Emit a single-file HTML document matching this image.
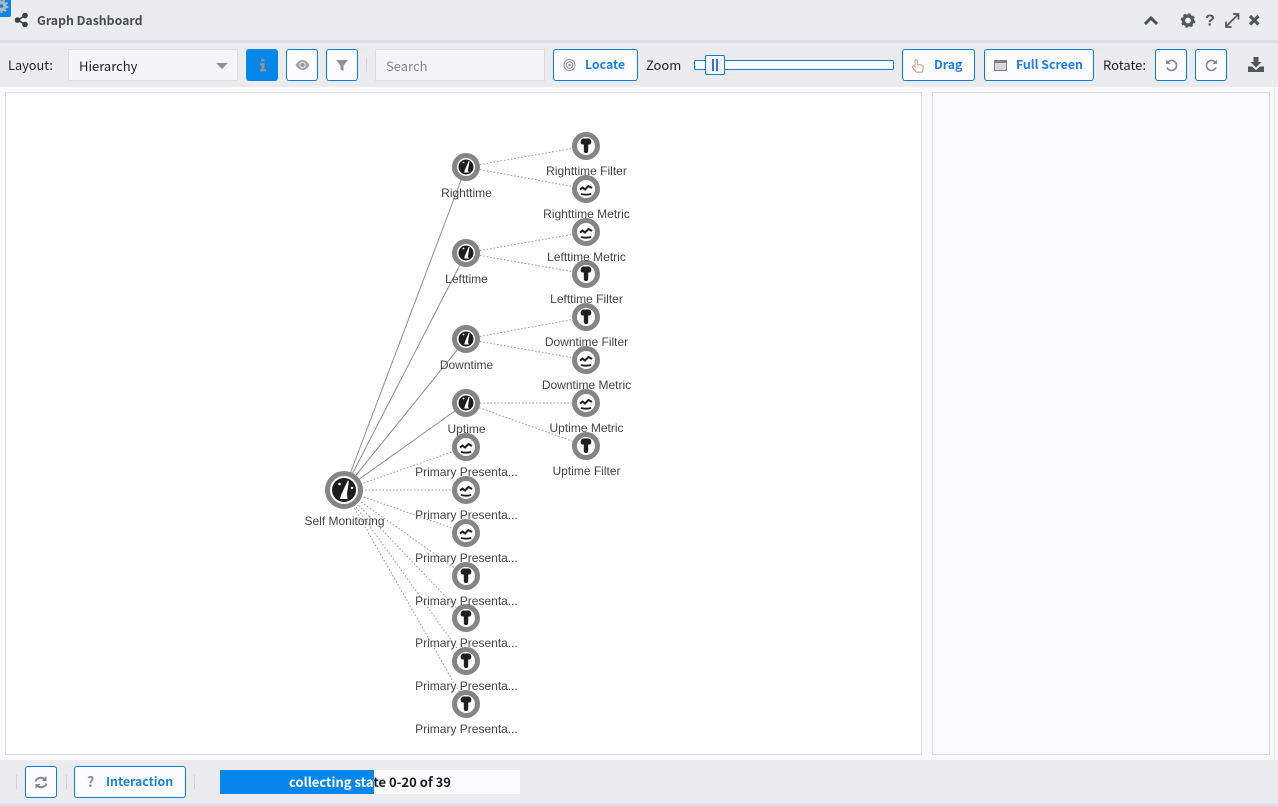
<!DOCTYPE html>
<html><head><meta charset="utf-8"><title>Graph Dashboard</title>
<style>
html,body{margin:0;padding:0;width:1278px;height:806px;overflow:hidden;background:#fafafc;font-family:"Noto Sans CJK JP","Liberation Sans",sans-serif;}
.a{position:absolute;box-sizing:border-box}
.btn{position:absolute;box-sizing:border-box;top:49px;height:32px;background:#fcfcff;border:1px solid #0a7fd6;border-radius:3px;color:#1f80e0;font-weight:700;font-size:12.3px;line-height:28px;white-space:nowrap}
.btn svg{position:absolute}
.lbl{position:absolute;font-size:13px;color:#222;line-height:18px;white-space:nowrap}
.sep{position:absolute;width:1px;background:#d2d2d8}
svg text{font-family:"Liberation Sans",sans-serif;font-size:12px;fill:#444;text-anchor:middle}
</style></head><body>
<div class="a" style="left:0;top:0;width:1278px;height:40px;background:#ebebf0"></div>
<div class="a" style="left:0;top:40px;width:1278px;height:3px;background:#dcdce2"></div>
<div class="a" style="left:0;top:43px;width:1278px;height:44px;background:#ebebf0"></div>

<div class="a" style="left:0;top:0;width:11px;height:17px;background:#0586e8;border-radius:0 0 2px 0"></div>
<svg class="a" style="left:0;top:0" width="9" height="14"><circle cx="1.500" cy="6" r="3.500" fill="none" stroke="#b5b5ba" stroke-width="3.500"/><circle cx="1.500" cy="6" r="6" fill="none" stroke="#b5b5ba" stroke-width="2" stroke-dasharray="2 2.200"/></svg>
<svg class="a" style="left:14px;top:12px" width="15" height="16" viewBox="0 0 15 16"><path d="M11 3.500 4 8l7 4.500" fill="none" stroke="#3d3d45" stroke-width="1.600"/><circle cx="11" cy="3.500" r="2.800" fill="#3d3d45"/><circle cx="3.500" cy="8" r="2.800" fill="#3d3d45"/><circle cx="11" cy="12.500" r="2.800" fill="#3d3d45"/></svg>
<div class="a" style="left:37px;top:11px;font-size:12.300px;line-height:18px;font-weight:700;color:#4a4a52;white-space:nowrap">Graph Dashboard</div>

<svg class="a" style="left:1140px;top:10px" width="125" height="22" viewBox="0 0 125 22">
<path d="M5 14l6-6 6 6" fill="none" stroke="#4f4f57" stroke-width="3"/>
<circle cx="48" cy="10.500" r="4.500" fill="none" stroke="#55555d" stroke-width="3.200"/><circle cx="48" cy="10.500" r="6.300" fill="none" stroke="#55555d" stroke-width="2" stroke-dasharray="2.500 2.450"/>
<text x="70" y="15.500" style="font-family:'Liberation Sans';font-size:16px;font-weight:700;fill:#55555d">?</text>
<path d="M86 16.500L98 4.500M86 11.500v5.500h5.500M98.500 9.500V4h-5.500" fill="none" stroke="#55555d" stroke-width="1.700"/>
<path d="M110 6l8.500 8.500M118.500 6l-8.500 8.500" stroke="#55555d" stroke-width="3.200" fill="none"/>
</svg>

<div class="lbl" style="left:8px;top:56px;font-size:12.800px">Layout:</div>
<div class="a" style="left:68px;top:49px;width:170px;height:32px;background:#f4f4f9;border:1px solid #dcdce2;"></div>
<div class="lbl" style="left:79px;top:57px;color:#222">Hierarchy</div>
<div class="a" style="left:216px;top:63px;width:0;height:0;border-left:6px solid transparent;border-right:6px solid transparent;border-top:6px solid #909097"></div>

<div class="btn" style="left:246px;width:32px;background:#0586e8;border-color:#0586e8"><svg style="left:12px;top:9px" width="8" height="13"><path d="M2 0h3.500v2.500H2zM1 4h4.500v6H7v2.500H1V10h1.500V6.500H1z" fill="#8a929a"/></svg></div>
<div class="btn" style="left:286px;width:32px"><svg style="left:8px;top:9px" width="15" height="12"><path d="M.5 6C3 2 5 1 7.500 1S12 2 14.500 6C12 10 10 11 7.500 11S3 10 .5 6z" fill="#a5a5a9"/><circle cx="7.500" cy="6" r="3.200" fill="#e8e8ec"/><circle cx="7.500" cy="6" r="2.200" fill="#9a9a9e"/></svg></div>
<div class="btn" style="left:326px;width:32px"><svg style="left:9px;top:9px" width="13" height="13"><path d="M0 1h12L7.500 6.500V12l-3-1.500v-4z" fill="#8f8f94"/></svg></div>
<div class="sep" style="left:366px;top:58px;height:14px"></div>
<div class="a" style="left:375px;top:49px;width:170px;height:32px;background:#f4f4f9;border:1px solid #dcdce2"></div>
<div class="lbl" style="left:386px;top:57px;color:#85858c">Search</div>
<div class="btn" style="left:553px;width:85px;padding-left:31px"><svg style="left:9px;top:8px" width="13" height="14"><circle cx="6.500" cy="7" r="5.500" fill="none" stroke="#9a9a9e" stroke-width="1"/><circle cx="6.500" cy="7" r="3.300" fill="none" stroke="#9a9a9e" stroke-width="1.200"/><circle cx="6.500" cy="7" r="1.300" fill="#9a9a9e"/></svg>Locate</div>
<div class="lbl" style="left:646px;top:56px">Zoom</div>
<div class="a" style="left:694px;top:60px;width:200px;height:10px;background:#fcfcff;border:1px solid #0a7fd6;border-radius:2px"></div>
<div class="a" style="left:705px;top:55px;width:20px;height:20px;background:#f4f6fc;border:1px solid #0a7fd6;border-radius:2px"></div>
<div class="a" style="left:712px;top:59px;width:2px;height:12px;background:#3b6fd0"></div>
<div class="a" style="left:716px;top:59px;width:2px;height:12px;background:#3b6fd0"></div>
<div class="btn" style="left:902px;width:73px;padding-left:31px"><svg style="left:8px;top:8px" width="15" height="16" viewBox="0 0 15 16"><path d="M5 1.500c1 0 1.300.5 1.300 1.500v4c2-.5 5.200-.3 5.700 1.200.5 1.800 0 4-1 6H5.500L1.500 9.500c-.6-1 .8-2 1.700-1.200L4 9V3c0-1 .3-1.500 1-1.500z" fill="none" stroke="#c9a27e" stroke-width="1.100"/></svg>Drag</div>
<div class="btn" style="left:984px;width:110px;padding-left:31px"><svg style="left:9px;top:10px" width="13" height="11"><rect x=".5" y=".5" width="12" height="10" fill="#d8d8de" stroke="#808086"/><rect x="0" y="0" width="13" height="3" fill="#808086"/></svg>Full Screen</div>
<div class="lbl" style="left:1103px;top:56px;font-size:13px">Rotate:</div>
<div class="btn" style="left:1155px;width:32px"><svg style="left:9px;top:8px" width="13" height="14" viewBox="0 0 13 14"><path d="M2.500 4.500A5 5 0 1 1 2 9.500" fill="none" stroke="#8a8a8e" stroke-width="1.600"/><path d="M1 1.500v4.500h4.500z" fill="#8a8a8e"/></svg></div>
<div class="btn" style="left:1195px;width:32px"><svg style="left:9px;top:8px" width="13" height="14" viewBox="0 0 13 14"><path d="M10.500 4.500A5 5 0 1 0 11 9.500" fill="none" stroke="#8a8a8e" stroke-width="1.600"/><path d="M12 1.500v4.500H7.500z" fill="#8a8a8e"/></svg></div>
<svg class="a" style="left:1248px;top:57px" width="16" height="15" viewBox="0 0 16 15"><path d="M5.500 0h5v5h3L8 10.500 2.500 5h3z" fill="#55555d"/><path d="M0 9.500h4L8 13l4-3.500h4V15H0z" fill="#55555d"/></svg>

<div class="a" style="left:5px;top:92px;width:917px;height:663px;background:#fff;border:1px solid #dcdde3"></div>
<div class="a" style="left:932px;top:92px;width:338px;height:663px;background:#fbfbfe;border:1px solid #dcdde3"></div>
<div class="a" style="left:1274px;top:87px;width:1px;height:673px;background:#e3e3e8"></div>

<svg class="a" style="left:0;top:0" width="1278" height="806" viewBox="0 0 1278 806">
<defs>
<g id="f"><circle r="11.500" fill="#fff" stroke="#858585" stroke-width="5"/><path d="M-3-7.500h6C5-7 5.800-4.500 5-2.500 4.500-1.500 3.500-1.500 2.200-1.500V4.500C2.200 6.500 1.200 7 0 7S-2.200 6.500-2.200 4.500V-1.500C-3.500-1.500-4.500-1.500-5-2.500-5.800-4.500-5-7-3-7.500z" fill="#1d1d1d"/></g>
<g id="m"><circle r="11.500" fill="#fff" stroke="#858585" stroke-width="5"/><path d="M-6 .5l2.500-2L-1 .5 2.500-3 6-1" fill="none" stroke="#1d1d1d" stroke-width="2"/><path d="M-5 4.800C-2.500 6 2.500 6 5 4.800" fill="none" stroke="#1d1d1d" stroke-width="1.800"/></g>
<g id="g"><circle r="11.500" fill="#fff" stroke="#858585" stroke-width="5"/><circle r="7.500" fill="#1d1d1d"/><path d="M3.500-6L2 3 2.800 5.500h-4.600l.6-2.500L2.700-6z" fill="#fff"/><circle cx="-2.500" cy="-4.500" r=".9" fill="#fff"/></g>
<g id="r"><circle r="16.500" fill="#fff" stroke="#858585" stroke-width="5"/><circle r="12" fill="#1d1d1d"/><path d="M5-9L3 3.500 3.500 9h-7.500l1.500-5L3.800-9.500z" fill="#fff"/><circle cx="-4.500" cy="-6" r="1.300" fill="#fff"/><circle cx="8" cy="-2" r="1.200" fill="#fff"/></g>
</defs>
<g fill="none" stroke="#8e8e8e" stroke-width="1">
<path d="M344 490L466 167M344 490L466 253M344 490L466 339M344 490L466 403"/>
</g>
<g fill="none" stroke="#9a9a9a" stroke-width="1" stroke-dasharray="1.600 1.900">
<path d="M466 167L586 146M466 167L586 189M466 253L586 232M466 253L586 274M466 339L586 317M466 339L586 360M466 403L586 403M466 403L586 446"/>
<path d="M344 490L466 447M344 490L466 490M344 490L466 533M344 490L466 576M344 490L466 618M344 490L466 661M344 490L466 704"/>
</g>
<use href="#r" x="344" y="490"/>
<use href="#g" x="466" y="167"/><use href="#g" x="466" y="253"/><use href="#g" x="466" y="339"/><use href="#g" x="466" y="403"/>
<use href="#m" x="466" y="447"/><use href="#m" x="466" y="490"/><use href="#m" x="466" y="533"/>
<use href="#f" x="466" y="576"/><use href="#f" x="466" y="618"/><use href="#f" x="466" y="661"/><use href="#f" x="466" y="704"/>
<use href="#f" x="586" y="146"/><use href="#m" x="586" y="189"/><use href="#m" x="586" y="232"/><use href="#f" x="586" y="274"/>
<use href="#f" x="586" y="317"/><use href="#m" x="586" y="360"/><use href="#m" x="586" y="403"/><use href="#f" x="586" y="446"/>
<text x="344.500" y="525">Self Monitoring</text>
<text x="466.500" y="197">Righttime</text>
<text x="466.500" y="283">Lefttime</text>
<text x="466.500" y="369">Downtime</text>
<text x="466.500" y="433">Uptime</text>
<text x="466.500" y="476">Primary Presenta...</text>
<text x="466.500" y="519">Primary Presenta...</text>
<text x="466.500" y="562">Primary Presenta...</text>
<text x="466.500" y="605">Primary Presenta...</text>
<text x="466.500" y="647">Primary Presenta...</text>
<text x="466.500" y="690">Primary Presenta...</text>
<text x="466.500" y="733">Primary Presenta...</text>
<text x="586.500" y="175">Righttime Filter</text>
<text x="586.500" y="218">Righttime Metric</text>
<text x="586.500" y="261">Lefttime Metric</text>
<text x="586.500" y="303">Lefttime Filter</text>
<text x="586.500" y="346">Downtime Filter</text>
<text x="586.500" y="389">Downtime Metric</text>
<text x="586.500" y="432">Uptime Metric</text>
<text x="586.500" y="475">Uptime Filter</text>
</svg>

<div class="a" style="left:0;top:760px;width:1278px;height:43px;background:#ebebf0"></div>
<div class="a" style="left:0;top:803px;width:1278px;height:3px;background:#e0e0e6"></div>
<div class="sep" style="left:16px;top:775px;height:14px"></div>
<div class="btn" style="left:25px;top:766px;width:32px"><svg style="left:8px;top:9px" width="14" height="13" viewBox="0 0 14 13"><path d="M1.500 5.500A5.500 5 0 0 1 11 3.500M12.500 7.500A5.500 5 0 0 1 3 9.500" fill="none" stroke="#8a8a8e" stroke-width="2"/><path d="M12.500 0v5h-5zM1.500 13V8h5z" fill="#8a8a8e"/></svg></div>
<div class="sep" style="left:66px;top:775px;height:14px"></div>
<div class="btn" style="left:74px;top:766px;width:112px;padding-left:31px">Interaction<span style="position:absolute;left:12px;top:1px;color:#8a8a8e;font-size:14px;font-weight:700">?</span></div>
<div class="sep" style="left:194px;top:775px;height:14px"></div>
<div class="a" style="left:220px;top:770px;width:300px;height:24px;background:#fcfcff;color:#1a1a1a;font-size:13px;font-weight:700;text-align:center;line-height:24px;white-space:nowrap">collecting state 0-20 of 39</div>
<div class="a" style="left:220px;top:770px;width:154px;height:24px;background:#0586e8;overflow:hidden"><div style="width:300px;color:#fff;font-size:13px;font-weight:700;text-align:center;line-height:24px;white-space:nowrap">collecting state 0-20 of 39</div></div>
</body></html>
